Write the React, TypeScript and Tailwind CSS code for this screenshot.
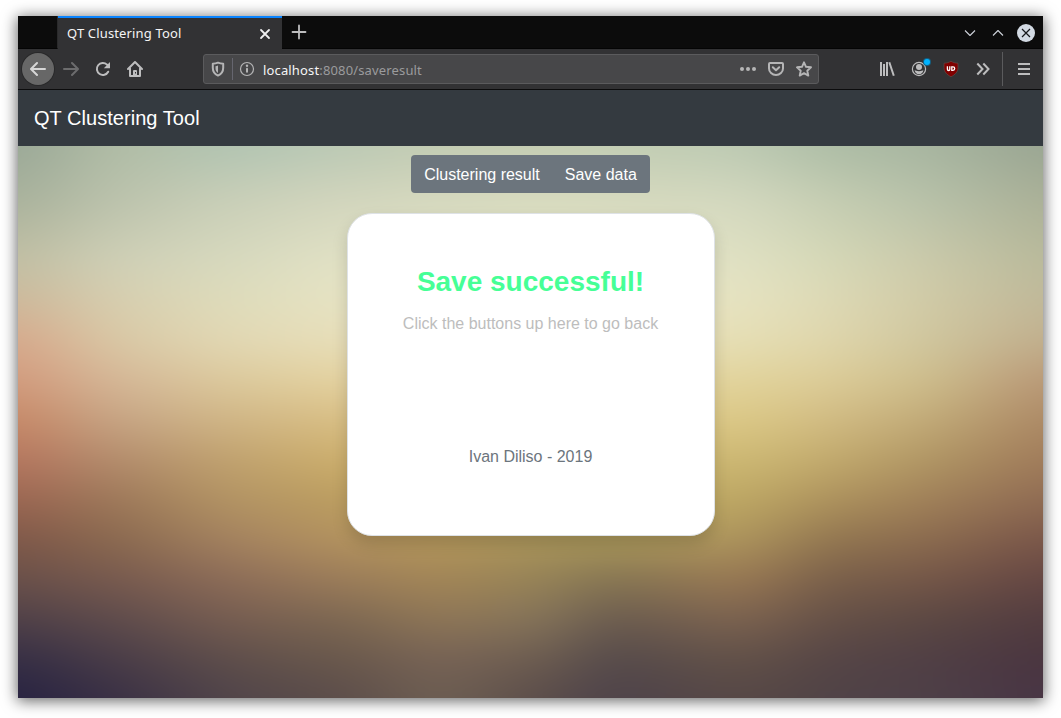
import type { ReactNode } from "react";

const stopsY = [146, 200, 260, 300, 340, 380, 420, 460, 500, 540, 580, 620, 660, 698];

const columns: { x: number; colors: string[] }[] = [
  { x: 18, colors: ["#9aa897", "#a9b29c", "#c1bfa4", "#cdb99b", "#d7a98c", "#d29b7e", "#c78968", "#b5765f", "#9b6652", "#7f5849", "#69504a", "#4f4048", "#352e45", "#282342"] },
  { x: 120, colors: ["#b1bda6", "#bcc3ad", "#cfd0b7", "#d7cfb0", "#d9c9a6", "#d5b898", "#c6a585", "#b38d6d", "#9d795a", "#8b6a50", "#785a4f", "#5f4c4c", "#4a3d48", "#3b3145"] },
  { x: 230, colors: ["#b1c4b2", "#c9cfb8", "#d7d9be", "#dedcbb", "#e2d8b4", "#dcca9d", "#d0b686", "#c0a26f", "#b39464", "#a48260", "#8c6c58", "#765d51", "#5e4e4b", "#51454a"] },
  { x: 340, colors: ["#bbc9b5", "#d2d5bd", "#e1e1c5", "#e6e3c3", "#e7deb9", "#e4d2a0", "#d8be84", "#ccae6c", "#bb9d60", "#b3925f", "#9b7c5a", "#7c6752", "#69584c", "#5c4d4a"] },
  { x: 440, colors: ["#c3ccb3", "#d6d9bf", "#e2e3c6", "#e7e4c3", "#e7dfb9", "#e4d4a0", "#dac388", "#ccb26c", "#bfa360", "#b3965b", "#a38657", "#8e7657", "#776356", "#6e5f52"] },
  { x: 540, colors: ["#c5cdb3", "#d8dbbf", "#e2e3c6", "#e7e4c3", "#e7dfb9", "#e4d4a0", "#dac388", "#ccb26c", "#bba360", "#a9955b", "#968357", "#84735a", "#6c5c50", "#5b4d4a"] },
  { x: 610, colors: ["#c3ceb4", "#d7dabf", "#e2e3c6", "#e7e4c3", "#e7dfb9", "#e4d4a0", "#dac388", "#ccb26c", "#bba860", "#a8965a", "#857553", "#6a5b4f", "#554a4b", "#4e434b"] },
  { x: 740, colors: ["#bdcab3", "#d3d8bf", "#e0e1c3", "#e6e3c1", "#e6dfb5", "#e2d49c", "#dcc986", "#cdb974", "#bea864", "#ae955d", "#997853", "#7c6350", "#625148", "#574846"] },
  { x: 830, colors: ["#adbda6", "#c5cdb2", "#d5d8b7", "#ddd9b5", "#dfd6ac", "#dccc98", "#d1bb83", "#c2aa6d", "#ad925d", "#927650", "#795f4a", "#655047", "#554546", "#504347"] },
  { x: 930, colors: ["#a7b5a0", "#b7c1a9", "#cac9aa", "#d0caa6", "#cfc69e", "#cdbd8c", "#c1aa78", "#b09664", "#a08059", "#8b6b4f", "#745648", "#5b4843", "#503f45", "#4e4048"] },
  { x: 1043, colors: ["#99a592", "#aab097", "#b9ba9b", "#c0b899", "#c1af8d", "#b99877", "#ac8965", "#a07b5a", "#8f6b53", "#7a5649", "#644643", "#523c40", "#4a3540", "#483545"] },
];

function Backdrop() {
  return (
    <svg viewBox="18 146 1025 552" className="absolute inset-0 h-[552px] w-[1025px]" aria-hidden="true">
      <defs>
        {columns.map((c, i) => (
          <linearGradient key={i} id={`v${i}`} gradientUnits="userSpaceOnUse" x1="0" y1="146" x2="0" y2="698">
            {c.colors.map((color, j) => (
              <stop key={j} offset={(stopsY[j] - 146) / 552} stopColor={color} />
            ))}
          </linearGradient>
        ))}
        {columns.slice(1).map((c, i) => (
          <g key={i}>
            <linearGradient id={`h${i + 1}`} gradientUnits="userSpaceOnUse" x1={columns[i].x} y1="0" x2={c.x} y2="0">
              <stop offset="0" stopColor="#fff" stopOpacity="0" />
              <stop offset="1" stopColor="#fff" />
            </linearGradient>
            <mask id={`m${i + 1}`} maskUnits="userSpaceOnUse" x="-100" y="60" width="1280" height="720">
              <rect x="-100" y="60" width="1280" height="720" fill={`url(#h${i + 1})`} />
            </mask>
          </g>
        ))}
        <filter id="soft" filterUnits="userSpaceOnUse" x="-100" y="60" width="1280" height="720" colorInterpolationFilters="sRGB">
          <feGaussianBlur stdDeviation="26 14" />
        </filter>
      </defs>
      <g filter="url(#soft)">
        {columns.map((_, i) => (
          <rect key={i} x="-100" y="60" width="1280" height="720" fill={`url(#v${i})`} mask={i ? `url(#m${i})` : undefined} />
        ))}
      </g>
    </svg>
  );
}

function Icon({ children, className = "", tone = "text-[#bdbdbe]" }: { children: ReactNode; className?: string; tone?: string }) {
  return (
    <svg viewBox="0 0 16 16" fill="none" stroke="currentColor" strokeWidth="2" strokeLinecap="round" strokeLinejoin="round" className={`h-4 w-4 shrink-0 ${tone} ${className}`}>
      {children}
    </svg>
  );
}

function TabStrip() {
  return (
    <div className="flex h-[33px] bg-[#0c0c0c]">
      <div className="w-10 border-r border-b border-r-[#2a2a2b] border-b-[#050505]" />
      <div className="flex w-[224px] items-center border-t-2 border-[#0a84ff] bg-[#323234] pr-[9px] pl-[9px]">
        <span className="-mt-0.5 flex-1 text-[13px] leading-[18px] tracking-[0.15px] text-[#f4f4f5]">QT Clustering Tool</span>
        <Icon tone="text-[#f0f0f1]"><path d="M4 4l8 8M12 4l-8 8" strokeWidth="1.8" /></Icon>
      </div>
      <div className="flex flex-1 items-center border-b border-[#050505] pr-2 pl-[9px]">
        <Icon tone="text-[#bdbdbe]"><path d="M8 1.500v13M1.500 8h13" strokeWidth="1.800" /></Icon>
        <div className="mt-px ml-auto flex items-center gap-3">
          <Icon tone="text-[#ccd1d8]"><path d="M3 5.500l5 5 5-5" strokeWidth="1.100" strokeLinecap="butt" /></Icon>
          <Icon tone="text-[#ccd1d8]"><path d="M3 10.500l5-5 5 5" strokeWidth="1.100" strokeLinecap="butt" /></Icon>
          <svg viewBox="0 0 18 18" className="-ml-[1px] h-[18px] w-[18px]">
            <circle cx="9" cy="9" r="9" fill="#d3dae3" />
            <path d="M5 5l8 8M13 5l-8 8" stroke="#15171a" strokeWidth="1.2" />
          </svg>
        </div>
      </div>
    </div>
  );
}

function Toolbar() {
  return (
    <div className="flex h-[41px] items-center border-b border-[#0c0c0d] bg-[#323234] pr-[11px] pl-1">
      <div className="flex h-8 w-8 items-center justify-center rounded-full bg-[#676767] shadow-[0_0_0_1px_#29292a]">
        <Icon tone="text-[#d6d6d6]"><path d="M15 8H1.5M7 2L1 8l6 6" /></Icon>
      </div>
      <Icon className="ml-[9px]" tone="text-[#6c6c6d]"><path d="M1 8h13.5M9 2l6 6-6 6" /></Icon>
      <Icon className="ml-4">
        <path d="M13.2 10.7A6 6 0 1 1 12 3.6L13 4.5" />
        <path d="M15 1v6.2H8.8z" fill="currentColor" stroke="none" />
      </Icon>
      <Icon className="ml-4">
        <path d="M1 8l7-7 7 7" />
        <path d="M3 7.5V15h10V7.5" />
        <path d="M6 15v-5a1 1 0 0 1 1-1h2a1 1 0 0 1 1 1v5z" fill="currentColor" stroke="none" />
        <path d="M8.500 11v1.500" stroke="#323234" strokeWidth="1" strokeLinecap="butt" />
      </Icon>

      <div className="ml-[60px] flex h-[30px] w-[616px] items-center rounded-[3px] border border-[#5b5b5d] bg-[#474749] pr-1.5 pl-1.5">
        <Icon tone="text-[#b5b5b6]">
          <path d="M8 1.700c1.700.7 3.400 1 5.200 1v4.100c0 3.500-1.700 6.300-5.200 7.800-3.500-1.500-5.200-4.300-5.200-7.800V2.700c1.800 0 3.500-.3 5.200-1z" />
          <path d="M8 4.500c-.8.4-1.500.6-2.500.7v2c0 2 .8 3.600 2.500 4.800z" fill="currentColor" stroke="none" />
        </Icon>
        <div className="ml-1.5 h-[22px] w-px bg-[#66666f]" />
        <Icon className="ml-1.5" tone="text-[#b5b5b6]">
          <circle cx="8" cy="8" r="6.5" strokeWidth="1.2" />
          <path d="M8 7.800v3" />
          <circle cx="8" cy="4.700" r="1.200" fill="currentColor" stroke="none" />
        </Icon>
        <span className="mt-0.5 ml-2 text-[13px] leading-[18px] tracking-[0.15px] text-[#9b9b9d]"><span className="text-[#f5f5f6]">localhost</span>:8080/saveresult</span>
        <div className="ml-auto flex gap-3">
          <Icon tone="text-[#b5b5b6]">
            <g fill="currentColor" stroke="none"><circle cx="2" cy="8" r="2" /><circle cx="8" cy="8" r="2" /><circle cx="14" cy="8" r="2" /></g>
          </Icon>
          <Icon tone="text-[#b5b5b6]">
            <path d="M2 2h12a1 1 0 0 1 1 1v4.500a7 6.500 0 0 1-14 0V3a1 1 0 0 1 1-1z" />
            <path d="M4.800 6.300L8 9.300l3.200-3" />
          </Icon>
          <Icon tone="text-[#b5b5b6]">
            <path d="M8 1.300l2 4.500 5 .5-3.700 3.400 1 4.900L8 12.100l-4.300 2.500 1-4.900L1 6.300l5-.5z" strokeWidth="1.900" />
          </Icon>
        </div>
      </div>

      <div className="ml-auto flex items-center">
        <Icon>
          <path d="M2 1v14M5 3v12M8 1v14M10.300 1.300l4.500 13.500" strokeLinecap="butt" />
        </Icon>
        <div className="relative ml-4 h-4 w-4">
          <Icon>
            <circle cx="8" cy="8" r="6.600" strokeWidth="1.200" />
            <circle cx="8" cy="6" r="3" fill="currentColor" stroke="none" />
            <path d="M3.600 9.200c1.200 0 1.800 1 4.400 1s3.200-1 4.400-1c-.2 2.300-2 4-4.400 4s-4.200-1.700-4.400-4z" fill="currentColor" stroke="none" />
          </Icon>
          <span className="absolute -top-[2px] left-[13px] h-1.5 w-1.5 rounded-full bg-[#00b3ff] shadow-[0_0_0_1px_#145f82]" />
        </div>
        <svg viewBox="0 0 16 16" className="ml-4 h-4 w-4">
          <path d="M8 .2c2 1.300 4.300 1.900 7 2v4.600c0 4.300-3 6.900-7 9-4-2.100-7-4.700-7-9V2.200C3.700 2.100 6 1.500 8 .2z" fill="#800000" stroke="#62534e" strokeWidth=".6" />
          <path d="M4.400 5.300v3a1.200 1.200 0 0 0 2.400 0v-3M8.800 5.900h1.200a1.700 1.700 0 0 1 0 3.400H8.800z" fill="none" stroke="#fff" strokeWidth="1.300" />
        </svg>
        <Icon className="ml-4"><path d="M2.300 2.500L7.500 8l-5.200 5.500M8.300 2.500L13.500 8l-5.200 5.500" strokeLinecap="butt" strokeLinejoin="miter" /></Icon>
        <div className="ml-[11px] h-[34px] w-px bg-[#5b5b5d]" />
        <Icon className="ml-[13px]"><path d="M2 3h12M2 8h12M2 13h12" strokeLinecap="butt" /></Icon>
      </div>
    </div>
  );
}

export default function App() {
  return (
    <div className="h-[718px] w-[1061px] overflow-hidden bg-white px-[18px] pt-4 font-['Noto_Sans',sans-serif]">
      <div className="h-[682px] w-[1025px] shadow-[0_2px_14px_1px_rgba(0,0,0,0.6)]">
        <TabStrip />
        <Toolbar />
        <div className="font-['Liberation_Sans',Arial,sans-serif]">
          <header className="flex h-14 items-center bg-[#343a40] px-4 text-xl tracking-[0.04px] text-white">QT Clustering Tool</header>
          <main className="relative h-[552px] overflow-hidden">
            <Backdrop />
            <div className="relative flex flex-col items-center pt-[9px]">
              <nav className="flex h-[38px] items-center rounded bg-[#6c757d] pt-0.5 text-base text-white">
                <button className="border border-transparent px-3">Clustering result</button>
                <button className="-ml-px border border-transparent px-3">Save data</button>
              </nav>
              <section className="mt-5 flex h-[323px] w-[368px] flex-col items-center rounded-[25px] border border-[#dee2e6] bg-white pt-[51px] text-base shadow-[0_8px_16px_rgba(0,0,0,0.15)]">
                <h1 className="text-[28px] leading-[34px] font-bold text-[#46ff96]">Save successful!</h1>
                <p className="mt-[13px] leading-6 text-[#bdbdbd]">Click the buttons up here to go back</p>
                <p className="mt-[109px] leading-6 text-[#6c757d]">Ivan Diliso - 2019</p>
              </section>
            </div>
          </main>
        </div>
      </div>
    </div>
  );
}
